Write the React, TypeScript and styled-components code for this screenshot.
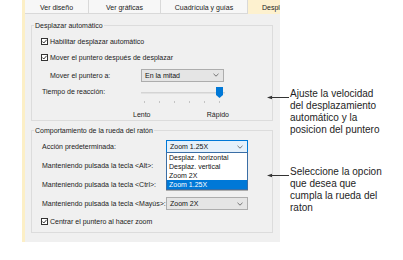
import React from "react";
import styled, { createGlobalStyle } from "styled-components";

const GlobalStyle = createGlobalStyle`
  html, body { margin: 0; padding: 0; background: #ffffff; }
  body { font-family: "Liberation Sans", Arial, sans-serif; color: #1b1b1b; }
  * { box-sizing: border-box; }
`;

const Page = styled.div`
  display: flex;
  align-items: flex-start;
  padding-left: 22px;
  width: 403px;
  height: 260px;
  overflow: hidden;
`;

const Dialog = styled.div`
  width: 258px;
  flex: 0 0 258px;
  border-left: 3px solid #fcefc6;
  display: flex;
  flex-direction: column;
`;

const TabBar = styled.div`
  display: flex;
  height: 14px;
  background: #f7f7f7;
`;

const Tab = styled.div<{ $w?: number; $active?: boolean }>`
  flex: ${(p) => (p.$w ? `0 0 ${p.$w}px` : "1 1 0")};
  min-width: 0;
  height: 14px;
  display: flex;
  align-items: center;
  padding-top: 1px;
  justify-content: ${(p) => (p.$active ? "flex-start" : "center")};
  padding-left: ${(p) => (p.$active ? "14px" : "0")};
  white-space: nowrap;
  overflow: hidden;
  font-size: 7px;
  color: #222;
  background: ${(p) => (p.$active ? "#fdf1cf" : "#f7f7f7")};
  border-right: ${(p) => (p.$active ? "none" : "1px solid #d9d9d9")};
  border-bottom: ${(p) => (p.$active ? "none" : "1px solid #d9d9d9")};
`;

const Content = styled.div`
  background: #f0f0f0;
  padding: 7px 7px 9px 6px;
  display: flex;
  flex-direction: column;
  gap: 5px;
`;

const Group = styled.fieldset`
  margin: 0;
  padding: 0;
  min-width: 0;
  border: 1px solid #dcdcdc;
`;

const Legend = styled.legend`
  margin-left: 2px;
  padding: 0 1px;
  font-size: 7px;
  line-height: 9px;
  color: #1b1b1b;
`;

const GroupBody = styled.div<{ $pt: number; $pb: number }>`
  display: flex;
  flex-direction: column;
  padding: ${(p) => p.$pt}px 0 ${(p) => p.$pb}px 0;
`;

const CheckRow = styled.div`
  height: 16px;
  display: flex;
  align-items: center;
  gap: 2px;
  padding-left: 9px;
  font-size: 7px;
  white-space: nowrap;
`;

const CheckBox = styled.span`
  width: 7px;
  height: 7px;
  flex: 0 0 7px;
  border: 1px solid #333;
  background: #fff;
  display: flex;
  align-items: center;
  justify-content: center;
`;

const FieldRow = styled.div<{ $indent: number; $label: number; $h: number }>`
  display: grid;
  grid-template-columns: ${(p) => p.$label}px auto;
  align-items: center;
  height: ${(p) => p.$h}px;
  padding-left: ${(p) => p.$indent}px;
  font-size: 7px;
  white-space: nowrap;
`;

const SliderRow = styled.div`
  display: grid;
  grid-template-columns: 99px auto;
  align-items: start;
  padding-left: 10px;
  font-size: 7px;
`;

const SliderCaption = styled.span`
  line-height: 13px;
  white-space: nowrap;
`;

const SliderBlock = styled.div`
  width: 84px;
  display: flex;
  flex-direction: column;
`;

const TrackArea = styled.div`
  position: relative;
  height: 13px;
  padding-top: 7px;
`;

const TrackLine = styled.div`
  height: 2px;
  background: #e2e2e2;
  border-top: 1px solid #d4d4d4;
`;

const Thumb = styled.svg`
  position: absolute;
  left: 75px;
  top: 2px;
  width: 7px;
  height: 11px;
`;

const Ticks = styled.div`
  display: flex;
  gap: 14px;
  padding-left: 3px;
  margin-top: 3px;
  height: 2px;
`;

const Tick = styled.span`
  width: 1px;
  height: 2px;
  background: #c4c4c4;
`;

const SliderLabels = styled.div`
  display: flex;
  justify-content: space-between;
  margin: 7px -4px 0 -8px;
  line-height: 9px;
  font-size: 7px;
`;

const Select = styled.div<{ $w: number; $focused?: boolean }>`
  position: relative;
  width: ${(p) => p.$w}px;
  height: 13px;
  display: flex;
  align-items: center;
  justify-content: space-between;
  padding: 0 4px 0 3px;
  border: 1px solid ${(p) => (p.$focused ? "#0078d7" : "#adadad")};
  background: ${(p) => (p.$focused ? "#e5f1fb" : "#e5e5e5")};
  font-size: 7px;
  color: #111;
`;

const Chevron = styled.svg`
  width: 6px;
  height: 4px;
`;

const DropList = styled.ul`
  position: absolute;
  top: 100%;
  left: -1px;
  right: -1px;
  margin: 0;
  padding: 0;
  list-style: none;
  background: #fff;
  border: 1px solid #3a6ea5;
  z-index: 2;
`;

const DropItem = styled.li<{ $selected?: boolean }>`
  height: 9px;
  line-height: 9px;
  padding-left: 2px;
  font-size: 7px;
  white-space: nowrap;
  background: ${(p) => (p.$selected ? "#0078d7" : "transparent")};
  color: ${(p) => (p.$selected ? "#ffffff" : "#111")};
`;

const Notes = styled.div`
  margin-left: 10px;
  padding-top: 88px;
  display: flex;
  flex-direction: column;
  gap: 30px;
  font-family: "Liberation Sans", Arial, sans-serif;
  font-size: 10px;
  line-height: 12px;
  color: #1e1e1e;
`;

const Note = styled.p`
  position: relative;
  margin: 0;
  white-space: nowrap;
`;

const Pointer = styled.svg`
  position: absolute;
  left: -23px;
  top: 7px;
  width: 22px;
  height: 5px;
  overflow: visible;
`;

const Check = () => (
  <CheckBox>
    <svg width="5" height="5" viewBox="0 0 5 5">
      <polyline points="0.4,2.5 1.8,4 4.6,0.8" fill="none" stroke="#222" strokeWidth="0.9" />
    </svg>
  </CheckBox>
);

const Arrow = () => (
  <Chevron viewBox="0 0 6 4">
    <polyline points="0.5,0.8 3,3.2 5.5,0.8" fill="none" stroke="#555" strokeWidth="0.8" />
  </Chevron>
);

const Callout = () => (
  <Pointer viewBox="0 0 22 5">
    <line x1="4" y1="2.5" x2="22" y2="2.5" stroke="#333" strokeWidth="1" />
    <polygon points="0,2.5 5,0.8 5,4.2" fill="#333" />
  </Pointer>
);

export default function App() {
  return (
    <>
      <GlobalStyle />
      <Page>
        <Dialog>
          <TabBar>
            <Tab $w={64}>Ver diseño</Tab>
            <Tab $w={72}>Ver gráficas</Tab>
            <Tab $w={87}>Cuadrícula y guías</Tab>
            <Tab $active>Desplazar</Tab>
          </TabBar>
          <Content>
            <Group>
              <Legend>Desplazar automático</Legend>
              <GroupBody $pt={3} $pb={1}>
                <CheckRow>
                  <Check />
                  Habilitar desplazar automático
                </CheckRow>
                <CheckRow>
                  <Check />
                  Mover el puntero después de desplazar
                </CheckRow>
                <FieldRow $indent={18} $label={91} $h={20}>
                  <span>Mover el puntero a:</span>
                  <Select $w={83}>
                    <span>En la mitad</span>
                    <Arrow />
                  </Select>
                </FieldRow>
                <SliderRow>
                  <SliderCaption>Tiempo de reacción:</SliderCaption>
                  <SliderBlock>
                    <TrackArea>
                      <TrackLine />
                      <Thumb viewBox="0 0 7 11">
                        <path d="M0 0 H7 V8 L3.5 11 L0 8 Z" fill="#0078d7" />
                      </Thumb>
                    </TrackArea>
                    <Ticks>
                      {[0, 1, 2, 3, 4, 5].map((i) => (
                        <Tick key={i} />
                      ))}
                    </Ticks>
                    <SliderLabels>
                      <span>Lento</span>
                      <span>Rápido</span>
                    </SliderLabels>
                  </SliderBlock>
                </SliderRow>
              </GroupBody>
            </Group>
            <Group>
              <Legend>Comportamiento de la rueda del ratón</Legend>
              <GroupBody $pt={2} $pb={3}>
                <FieldRow $indent={10} $label={124} $h={19}>
                  <span>Acción predeterminada:</span>
                  <Select $w={82} $focused>
                    <span>Zoom 1.25X</span>
                    <Arrow />
                    <DropList>
                      <DropItem>Desplaz. horizontal</DropItem>
                      <DropItem>Desplaz. vertical</DropItem>
                      <DropItem>Zoom 2X</DropItem>
                      <DropItem $selected>Zoom 1.25X</DropItem>
                    </DropList>
                  </Select>
                </FieldRow>
                <FieldRow $indent={10} $label={124} $h={19}>
                  <span>Manteniendo pulsada la tecla &lt;Alt&gt;:</span>
                  <Select $w={82} />
                </FieldRow>
                <FieldRow $indent={10} $label={124} $h={19}>
                  <span>Manteniendo pulsada la tecla &lt;Ctrl&gt;:</span>
                  <Select $w={82} />
                </FieldRow>
                <FieldRow $indent={10} $label={124} $h={19}>
                  <span>Manteniendo pulsada la tecla &lt;Mayús&gt;:</span>
                  <Select $w={82}>
                    <span>Zoom 2X</span>
                    <Arrow />
                  </Select>
                </FieldRow>
                <CheckRow>
                  <Check />
                  Centrar el puntero al hacer zoom
                </CheckRow>
              </GroupBody>
            </Group>
          </Content>
        </Dialog>
        <Notes>
          <Note>
            <Callout />
            Ajuste la velocidad
            <br />
            del desplazamiento
            <br />
            automático y la
            <br />
            posicion del puntero
          </Note>
          <Note>
            <Callout />
            Seleccione la opcion
            <br />
            que desea que
            <br />
            cumpla la rueda del
            <br />
            raton
          </Note>
        </Notes>
      </Page>
    </>
  );
}
